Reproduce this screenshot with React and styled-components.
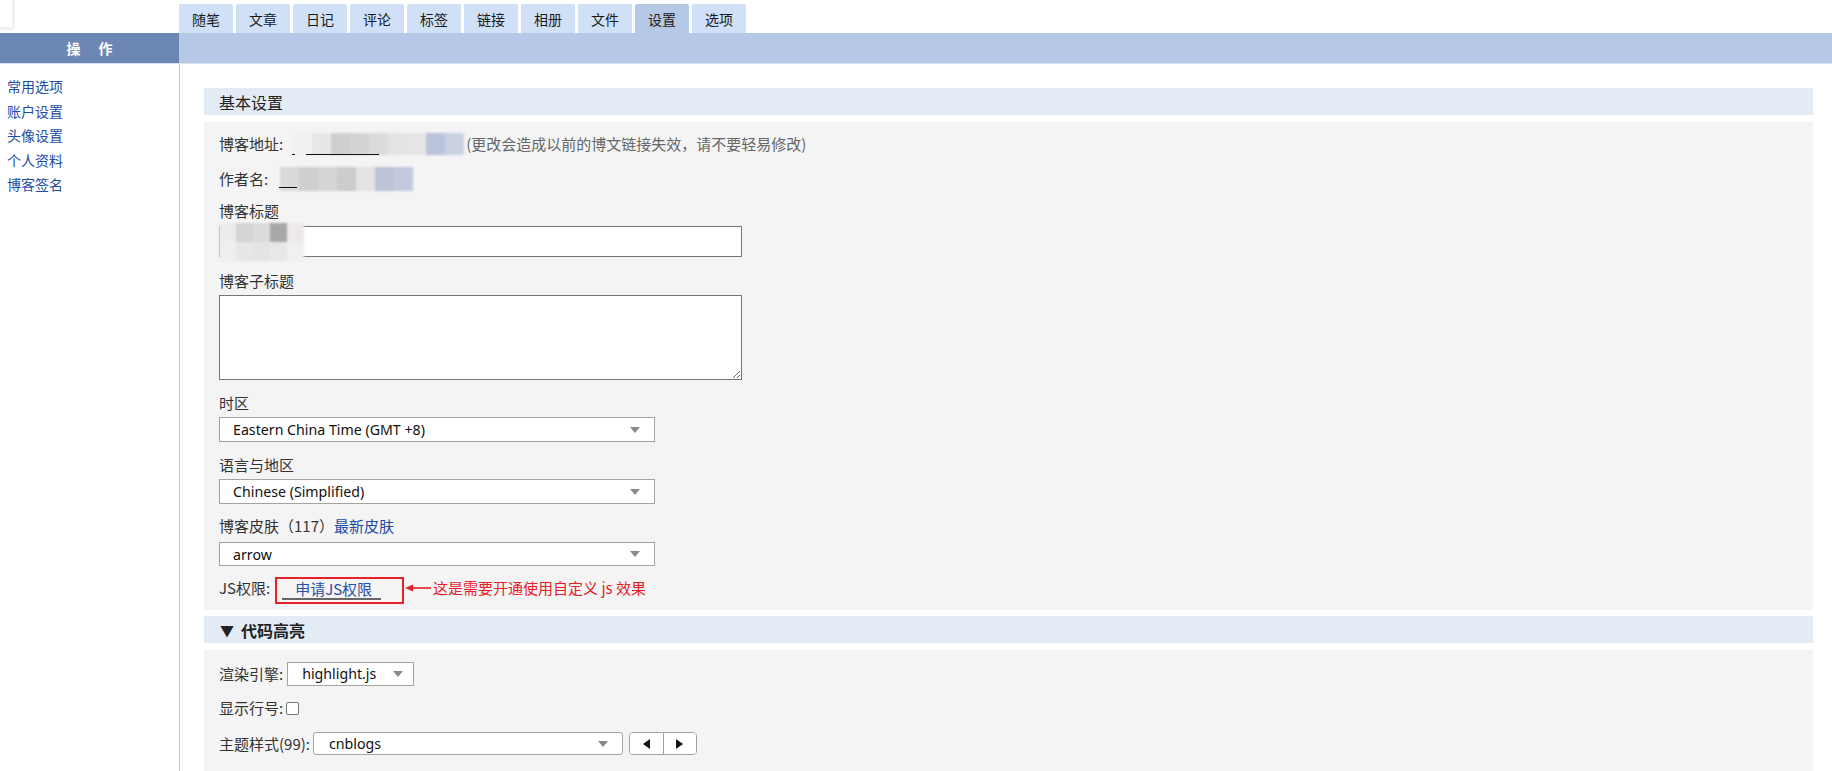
import React from "react";
import styled, { createGlobalStyle } from "styled-components";

const GlobalStyle = createGlobalStyle`
  html, body { margin: 0; padding: 0; background: #fff; }
  body {
    font-family: "Microsoft YaHei", "Noto Sans CJK SC", "Noto Sans", sans-serif;
    font-size: 15px;
    color: #333;
  }
  * { box-sizing: border-box; }
`;

const Page = styled.div`
  width: 1832px;
  min-height: 771px;
  display: flex;
  flex-direction: column;
`;

const TopRow = styled.div`
  display: flex;
  height: 33px;
`;

const LogoCell = styled.div`
  width: 179px;
  flex: none;
`;

const LogoBox = styled.div`
  width: 15px;
  height: 30px;
  border: 3px solid #f1f1f1;
  border-left: none;
  border-top: none;
  border-radius: 0 0 4px 0;
  background: #fff;
`;

const TabBar = styled.nav`
  display: flex;
  gap: 3px;
  align-items: flex-end;
`;

const Tab = styled.a`
  width: 54px;
  height: 29px;
  display: flex;
  align-items: center;
  justify-content: center;
  background: ${(p) => (p.$active ? "#b5c8e6" : "#d0e0f7")};
  border-radius: 2px 2px 0 0;
  color: #1a1a1a;
  font-size: 14px;
  text-decoration: none;
`;

const BandRow = styled.div`
  display: flex;
  height: 31px;
  border-bottom: 1px solid #d8e2f2;
`;

const SideHead = styled.div`
  width: 179px;
  flex: none;
  background: #6d87b4;
  color: #fff;
  font-weight: bold;
  font-size: 14px;
  display: flex;
  align-items: center;
  justify-content: center;
  gap: 18px;
`;

const Band = styled.div`
  flex: 1;
  background: #b5c8e6;
`;

const Body = styled.div`
  display: flex;
  flex: 1;
`;

const Sidebar = styled.aside`
  width: 180px;
  flex: none;
  border-right: 1px solid #b5c8e6;
  padding: 10px 0 0 7px;
  display: flex;
  flex-direction: column;
`;

const SideLink = styled.a`
  color: #1e4ba6;
  line-height: 24.5px;
  font-size: 14px;
  text-decoration: none;
`;

const Main = styled.main`
  flex: 1;
  padding: 24px 19px 0 24px;
`;

const SectionHead = styled.div`
  height: 27px;
  background: #e3ebf5;
  padding-left: ${(p) => (p.$bold ? "16px" : "15px")};
  display: flex;
  align-items: center;
  font-size: 16px;
  font-weight: ${(p) => (p.$bold ? "bold" : "normal")};
  color: #222;
  margin-bottom: 7px;
`;

const Arrow = styled.span`
  font-size: 14px;
  margin-right: 7px;
`;

const Panel = styled.section`
  background: #f4f4f4;
  padding: ${(p) => p.$pad};
  margin-bottom: 6px;
`;

const InlineRow = styled.div`
  display: flex;
  align-items: ${(p) => (p.$top ? "flex-start" : "center")};
  min-height: ${(p) => p.$h || "20px"};
  margin-bottom: ${(p) => p.$mb || "0px"};
  line-height: 20px;
`;

const Label = styled.label`
  display: block;
  line-height: 20px;
  margin-bottom: ${(p) => p.$mb || "3px"};
  color: #333;
`;

const InlineLabel = styled.span`
  color: #333;
  margin-right: ${(p) => p.$gap || "0px"};
  margin-top: ${(p) => p.$mt || "0px"};
  white-space: nowrap;
`;

const Hint = styled.span`
  color: #666;
  margin-left: 2px;
`;

const LinkText = styled.a`
  color: #1e4ba6;
  text-decoration: none;
`;

const MosaicWrap = styled.span`
  position: relative;
  display: inline-block;
  height: 20px;
  margin-left: ${(p) => p.$ml || "0px"};
`;

const Mosaic = styled.span`
  display: grid;
  grid-template-columns: repeat(${(p) => p.$cols}, ${(p) => p.$cw}px);
  grid-auto-rows: ${(p) => p.$ch}px;
  margin-top: ${(p) => p.$mt || 0}px;
  filter: blur(1.2px);
`;

const Cell = styled.span`
  background: ${(p) => p.$c};
`;

const Underline = styled.span`
  position: absolute;
  height: 1px;
  background: #111;
  left: ${(p) => p.$l}px;
  width: ${(p) => p.$w}px;
  top: ${(p) => p.$t}px;
`;

const InputWrap = styled.div`
  position: relative;
  width: 523px;
  margin-bottom: ${(p) => p.$mb};
`;

const TextInput = styled.div`
  width: 523px;
  height: 31px;
  background: #fff;
  border: 1px solid #767676;
`;

const Overlay = styled.div`
  position: absolute;
  left: 0;
  top: -3px;
`;

const TextArea = styled.textarea`
  display: block;
  width: 523px;
  height: 85px;
  background: #fff;
  border: 1px solid #767676;
  margin: 0 0 ${(p) => p.$mb || "15px"} 0;
  padding: 2px;
  resize: both;
  font: inherit;
`;

const SelectBox = styled.div`
  display: flex;
  align-items: center;
  justify-content: space-between;
  width: ${(p) => p.$w}px;
  height: ${(p) => p.$h || 25}px;
  background: #fff;
  border: 1px solid #a3a3a3;
  border-radius: ${(p) => (p.$round ? "3px" : "0")};
  padding: 0 ${(p) => p.$pr || 14}px 0 ${(p) => p.$pl || 13}px;
  margin-bottom: ${(p) => p.$mb || "0px"};
  font-family: "Noto Sans", "Open Sans", sans-serif;
  font-size: 14.2px;
  color: #111;
  flex: none;
`;

const Caret = styled.span`
  width: 0;
  height: 0;
  border-left: 5px solid transparent;
  border-right: 5px solid transparent;
  border-top: 6px solid #8a8a8a;
`;

const RedBox = styled.div`
  height: 27px;
  border: 2px solid #e8202a;
  padding: 0 21px 0 5px;
  display: flex;
  align-items: flex-start;
`;

const ApplyLink = styled.a`
  color: #2a4ea3;
  text-decoration: none;
  padding: 0 9px 0 13px;
  border-bottom: 2px solid #666;
  line-height: 19px;
`;

const ArrowSvg = styled.svg`
  flex: none;
  margin-top: 6px;
`;

const Note = styled.span`
  color: #e8202a;
  margin-left: 1px;
  margin-top: 1px;
`;

const CheckBox = styled.span`
  width: 13px;
  height: 13px;
  border: 1px solid #767676;
  border-radius: 2px;
  background: #fff;
  margin-left: 3px;
`;

const BtnGroup = styled.div`
  display: flex;
  height: 23px;
  border: 1px solid #a0a0a0;
  border-radius: 4px;
  overflow: hidden;
  margin-left: 6px;
  background: #fff;
`;

const NavBtn = styled.button`
  width: 33px;
  height: 100%;
  border: none;
  border-left: ${(p) => (p.$divider ? "1px solid #a0a0a0" : "none")};
  background: #fff;
  display: flex;
  align-items: center;
  justify-content: center;
  padding: 0;
`;

const Tri = styled.span`
  width: 0;
  height: 0;
  border-top: 5.5px solid transparent;
  border-bottom: 5.5px solid transparent;
  ${(p) =>
    p.$dir === "left"
      ? "border-right: 7px solid #111;"
      : "border-left: 7px solid #111;"}
`;

const tabs = ["随笔", "文章", "日记", "评论", "标签", "链接", "相册", "文件", "设置", "选项"];
const sideLinks = ["常用选项", "账户设置", "头像设置", "个人资料", "博客签名"];

function Blur({ cols, cw, ch, mt, colors, ml, lines = [] }) {
  return (
    <MosaicWrap $ml={ml}>
      <Mosaic $cols={cols} $cw={cw} $ch={ch} $mt={mt}>
        {colors.map((c, i) => (
          <Cell key={i} $c={c} />
        ))}
      </Mosaic>
      {lines.map((l, i) => (
        <Underline key={i} $l={l[0]} $w={l[1]} $t={l[2]} />
      ))}
    </MosaicWrap>
  );
}

function Select({ value, w, h, mb, round, pl, pr }) {
  return (
    <SelectBox $w={w} $h={h} $mb={mb} $round={round} $pl={pl} $pr={pr}>
      <span>{value}</span>
      <Caret />
    </SelectBox>
  );
}

export default function App() {
  return (
    <Page>
      <GlobalStyle />
      <TopRow>
        <LogoCell>
          <LogoBox />
        </LogoCell>
        <TabBar>
          {tabs.map((t) => (
            <Tab key={t} $active={t === "设置"}>
              {t}
            </Tab>
          ))}
        </TabBar>
      </TopRow>
      <BandRow>
        <SideHead>
          <span>操</span>
          <span>作</span>
        </SideHead>
        <Band />
      </BandRow>
      <Body>
        <Sidebar>
          {sideLinks.map((l) => (
            <SideLink key={l}>{l}</SideLink>
          ))}
        </Sidebar>
        <Main>
          <SectionHead>基本设置</SectionHead>
          <Panel $pad="12px 15px 6px 15px">
            <InlineRow $mb="15px">
              <InlineLabel>博客地址:</InlineLabel>
              <Blur
                ml="10px"
                cols={9}
                cw={19}
                ch={22}
                mt={-1}
                colors={["#f1f1f1", "#e7e7e7", "#cfcfcf", "#d3d3d3", "#dbdbdb", "#e3e3e3", "#e6e6e6", "#b9c3dc", "#ccd1e2"]}
                lines={[[-1, 3, 20], [13, 73, 20]]}
              />
              <Hint>(更改会造成以前的博文链接失效，请不要轻易修改)</Hint>
            </InlineRow>
            <InlineRow $mb="12px">
              <InlineLabel>作者名:</InlineLabel>
              <Blur
                ml="12px"
                cols={7}
                cw={19}
                ch={24}
                mt={-2}
                colors={["#dadada", "#cfcfcf", "#d5d5d5", "#cdcbcb", "#e3e3e3", "#bcc4da", "#c4cadd"]}
                lines={[[-1, 18, 18]]}
              />
            </InlineRow>
            <Label $mb="5px">博客标题</Label>
            <InputWrap $mb="14px">
              <TextInput />
              <Overlay>
                <Mosaic $cols={5} $cw={17} $ch={19}>
                  {["#ececec", "#d4d4d4", "#dcdcdc", "#aaa7aa", "#ede9e9", "#eeeeee", "#e6e6e6", "#e4e4e4", "#e8e8e8", "#f0f0f0"].map((c, i) => (
                    <Cell key={i} $c={c} />
                  ))}
                </Mosaic>
              </Overlay>
            </InputWrap>
            <Label $mb="4px">博客子标题</Label>
            <TextArea defaultValue="" $mb="13px" />
            <Label $mb="4px">时区</Label>
            <Select value="Eastern China Time (GMT +8)" w={436} mb="13px" />
            <Label $mb="4px">语言与地区</Label>
            <Select value="Chinese (Simplified)" w={436} mb="12px" />
            <Label $mb="6px">
              博客皮肤（117）<LinkText>最新皮肤</LinkText>
            </Label>
            <Select value="arrow" w={436} h={24} mb="11px" />
            <InlineRow $h="27px" $top>
              <InlineLabel $gap="5px" $mt="1px">JS权限:</InlineLabel>
              <RedBox>
                <ApplyLink>申请JS权限</ApplyLink>
              </RedBox>
              <ArrowSvg width="28" height="10" viewBox="0 0 28 10">
                <polygon points="1,5 9,1.5 9,8.5" fill="#e8202a" />
                <rect x="8" y="4.2" width="19" height="1.6" fill="#e8202a" />
              </ArrowSvg>
              <Note>这是需要开通使用自定义 js 效果</Note>
            </InlineRow>
          </Panel>
          <SectionHead $bold>
            <Arrow>▼</Arrow>代码高亮
          </SectionHead>
          <Panel $pad="12px 15px 20px 15px">
            <InlineRow $h="24px" $mb="12px">
              <InlineLabel $gap="4px">渲染引擎:</InlineLabel>
              <Select value="highlight.js" w={127} h={24} pl={14} pr={10} />
            </InlineRow>
            <InlineRow $mb="14px">
              <InlineLabel>显示行号:</InlineLabel>
              <CheckBox />
            </InlineRow>
            <InlineRow $h="23px">
              <InlineLabel $gap="3px">主题样式(99):</InlineLabel>
              <Select value="cnblogs" w={310} h={23} round pl={15} pr={14} />
              <BtnGroup>
                <NavBtn aria-label="上一个">
                  <Tri $dir="left" />
                </NavBtn>
                <NavBtn $divider aria-label="下一个">
                  <Tri $dir="right" />
                </NavBtn>
              </BtnGroup>
            </InlineRow>
          </Panel>
        </Main>
      </Body>
    </Page>
  );
}
